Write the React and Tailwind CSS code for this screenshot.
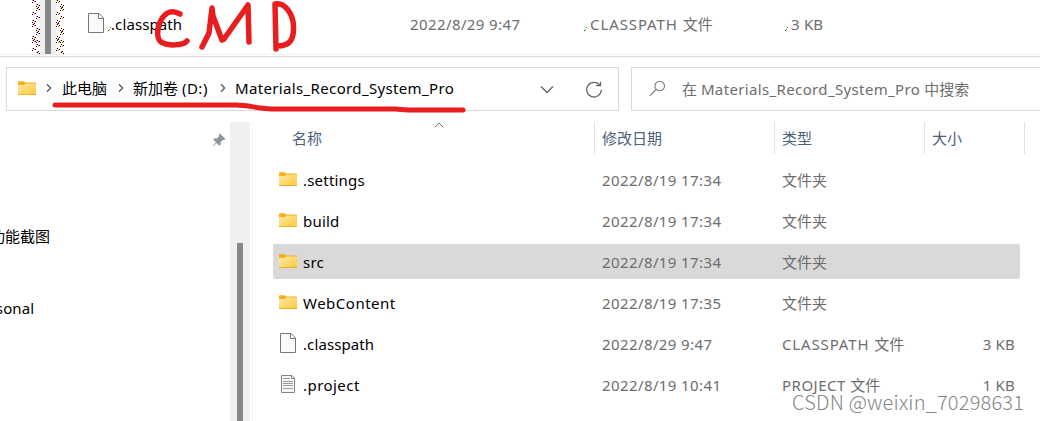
import React from 'react';

const rows = [
  { name: '.settings', date: '2022/8/19 17:34', type: '', kind: '文件夹', size: '', icon: 'folder' },
  { name: 'build', date: '2022/8/19 17:34', type: '', kind: '文件夹', size: '', icon: 'folder' },
  { name: 'src', date: '2022/8/19 17:34', type: '', kind: '文件夹', size: '', icon: 'folder', selected: true },
  { name: 'WebContent', date: '2022/8/19 17:35', type: '', kind: '文件夹', size: '', icon: 'folder', spacing: 'tracking-[0.5px]' },
  { name: '.classpath', date: '2022/8/29 9:47', type: 'CLASSPATH ', kind: '文件', size: '3 KB', icon: 'file', spacing: 'tracking-[0.1px]' },
  { name: '.project', date: '2022/8/19 10:41', type: 'PROJECT ', kind: '文件', size: '1 KB', icon: 'text', spacing: 'tracking-[0.45px]' },
];

const FolderIcon = () => (
  <svg width="18" height="15" viewBox="0 0 18 15" className="shrink-0">
    <defs>
      <linearGradient id="folder" x1="0" y1="0" x2="1" y2="1">
        <stop offset="0" stopColor="#ffe9a6" />
        <stop offset="1" stopColor="#ffc937" />
      </linearGradient>
    </defs>
    <path d="M0 1.2Q0 .2 1 .2H5.6L7.4 1.5H17Q18 1.5 18 2.5V5H0Z" fill="#f5b01c" />
    <path d="M0 4H5.8L7.6 2.6H18V14H0Z" fill="url(#folder)" />
    <path d="M0 13.5H18" stroke="#eeb02c" />
  </svg>
);

const FileIcon = () => (
  <svg width="17" height="21" viewBox="0 0 17 21" className="shrink-0">
    <path d="M.5 .5H11L15.5 5V19.5H.5Z" fill="#fafafa" stroke="#777" />
    <path d="M10.5 .5V5.5H15.5" fill="none" stroke="#777" />
  </svg>
);

const TextFileIcon = () => (
  <svg width="15" height="19" viewBox="0 0 15 19" className="shrink-0">
    <path d="M.5 .5H11L13.5 3V17.5H.5Z" fill="#f7f7f7" stroke="#858585" />
    <path d="M10.5 .5V3.5H13.5" fill="none" stroke="#858585" />
    <path d="M2 3.5H9M2 6.5H12M2 8.5H12M2 10.5H12M2 13.5H12" stroke="#9a9a9a" />
  </svg>
);

const icons = { folder: FolderIcon, file: FileIcon, text: TextFileIcon };

const Chevron = () => (
  <svg width="6" height="10" viewBox="0 0 6 10" className="shrink-0">
    <path d="M1 1.2L4.6 5L1 8.8" fill="none" stroke="#606060" strokeWidth="1.4" />
  </svg>
);

// leftover pixels along the edges of the old scrollbar
const Speckle = ({ id, a, b }) => (
  <svg width="8" height="54" viewBox="0 0 8 54" className="shrink-0" shapeRendering="crispEdges">
    <defs>
      <pattern id={id} width="4" height="4" patternUnits="userSpaceOnUse">
        <path d="M1 0h1v1h-1zM0 2h1v1h-1zM3 1h1v1h-1zM2 3h1v1h-1z" fill="#000" />
        <path d="M0 0h1v1h-1zM2 1h1v1h-1z" fill={a} />
        <path d="M2 2h1v1h-1zM1 3h1v1h-1z" fill={b} />
      </pattern>
    </defs>
    <path
      d="M0 0H4V3H0ZM4 4H8V11H4ZM0 12H4V15H0ZM4 16H8V19H4ZM0 20H4V27H0ZM4 28H8V35H4ZM0 36H4V43H0ZM4 40H8V43H4ZM4 44H8V47H4ZM0 48H4V51H0ZM4 51H8V54H4Z"
      fill={`url(#${id})`}
    />
  </svg>
);

const Speck = () => (
  <svg width="3" height="4" viewBox="0 0 3 4" className="mt-[10px] shrink-0" shapeRendering="crispEdges">
    <path d="M1 0h1v1h-1z" fill="#f5e663" />
    <path d="M2 0h1v1h-1zM1 2h1v1h-1z" fill="#4fa84f" />
    <path d="M0 3h1v1h-1z" fill="#334" />
  </svg>
);

const TopStrip = () => (
  <div className="flex h-[57px] shrink-0 flex-col border-b border-[#d9d9d9]">
    <div className="flex h-[55px] border-b border-[#f1f1f1]">
      <div className="flex h-[54px] w-[88px] pl-8">
        <Speckle id="speckle-a" a="#f6f" b="#ee3" />
        <div className="flex w-4 justify-center bg-[#f0f0f0]">
          <div className="w-[6px] bg-[#868686]" />
        </div>
        <Speckle id="speckle-b" a="#ee3" b="#c4a" />
      </div>
      <div className="flex h-12 items-center text-[#6d6d6d]">
        <div className="w-5 pb-[1px]"><FileIcon /></div>
        <div className="w-[3px]"><Speck /></div>
        <div className="w-[299px] text-black tracking-[0.1px]">.classpath</div>
        <div className="w-[174px] tracking-[0.4px]">2022/8/29 9:47</div>
        <div className="w-[6px]"><Speck /></div>
        <div className="w-[195px]"><span className="tracking-[0.9px]">CLASSPATH </span>文件</div>
        <div className="w-[6px]"><Speck /></div>
        <div className="tracking-[0.2px]">3 KB</div>
      </div>
    </div>
  </div>
);

const AddressBar = () => (
  <div className="flex shrink-0 gap-3 pt-[10px] pl-[6px]">
    <div className="flex h-11 w-[613px] items-center border border-[#d9d9d9] pb-[2px] pl-[11px]">
      <FolderIcon />
      <div className="w-[26px] pl-[10px]"><Chevron /></div>
      <div className="w-[56px]">此电脑</div>
      <div className="w-[15px]"><Chevron /></div>
      <div className="w-[87px]">新加卷 <span className="tracking-[0.5px]">(D:)</span></div>
      <div className="w-[15px]"><Chevron /></div>
      <div className="w-[305px] tracking-[0.35px]">Materials_Record_System_Pro</div>
      <svg width="14" height="9" viewBox="0 0 14 9" className="mt-[2px]">
        <path d="M1 1.5L7 7.5L13 1.5" fill="none" stroke="#666" strokeWidth="1.4" />
      </svg>
      <svg width="18" height="18" viewBox="0 0 18 18" className="mt-[3px] ml-[31px]">
        <path d="M14.8 4.2A7.3 7.3 0 1 0 16.3 9" fill="none" stroke="#686868" strokeWidth="1.3" />
        <path d="M15.5 .8V4.6H11" fill="none" stroke="#686868" strokeWidth="1.3" />
      </svg>
    </div>
    <div className="flex h-11 flex-1 items-center border border-r-0 border-[#d9d9d9] pl-[17px] text-[#6d6d6d]">
      <svg width="17" height="17" viewBox="0 0 17 17" className="mb-[2px]">
        <circle cx="10.7" cy="6" r="4.8" fill="none" stroke="#777" strokeWidth="1.1" />
        <path d="M7.2 9.4L.8 15.6" stroke="#777" strokeWidth="1.2" />
      </svg>
      <div className="ml-4">在 <span className="tracking-[0.36px]">Materials_Record_System_Pro</span> 中搜索</div>
    </div>
  </div>
);

const SideNav = () => (
  <div className="flex w-[253px] shrink-0 border-r border-[#f3f3f3]">
    <div className="w-[230px] overflow-hidden whitespace-nowrap">
      <div className="flex h-9 items-center justify-end pr-1">
        <svg width="14" height="14" viewBox="0 0 14 14">
          <path d="M8 .5L13.5 6L12 7L11 6.8L8.8 9L8.5 12L7.3 12.8L4.5 10L1 13.5L.5 13L4 9.5L1.2 6.6L2 5.5L5 5.2L7.2 3L7 1.5Z" fill="#8b969f" />
        </svg>
      </div>
      <div className="-ml-[10px] mt-[60px] h-9 leading-9 text-black">功能截图</div>
      <div className="-ml-[19px] mt-9 h-9 leading-9 tracking-[0.1px] text-black">ersonal</div>
    </div>
    <div className="flex w-5 justify-center bg-[#f0f0f0]">
      <div className="mt-[121px] w-[6px] bg-[#868686]" />
    </div>
  </div>
);

const FileList = () => (
  <div className="flex-1">
    <div className="flex h-8 items-center text-[#4c607a]">
      <div className="flex h-8 w-[342px] items-center border-r border-[#e3e3e3] pl-[39px]">
        名称
        <svg width="10" height="6" viewBox="0 0 10 6" className="mb-[26px] ml-[112px]">
          <path d="M.7 5.3L5 1L9.3 5.3" fill="none" stroke="#777" />
        </svg>
      </div>
      <div className="flex h-8 w-[180px] items-center border-r border-[#e3e3e3] pl-[7px]">修改日期</div>
      <div className="flex h-8 w-[150px] items-center border-r border-[#e3e3e3] pl-[7px]">类型</div>
      <div className="flex h-8 w-[100px] items-center border-r border-[#e3e3e3] pl-[7px]">大小</div>
    </div>
    <div className="flex flex-col gap-[6px] pt-2 pl-5">
      {rows.map((row) => {
        const Icon = icons[row.icon];
        return (
          <div
            key={row.name}
            className={`flex h-[35px] w-[747px] items-center rounded-[2px] text-[#6d6d6d] ${row.selected ? 'bg-[#d9d9d9]' : ''}`}
          >
            <div className="flex w-[30px] justify-center pb-[1px]"><Icon /></div>
            <div className={`w-[299px] text-black ${row.spacing || 'tracking-[0.2px]'}`}>{row.name}</div>
            <div className="w-[180px] tracking-[0.4px]">{row.date}</div>
            <div className="w-[130px]"><span className={row.icon === 'file' ? 'tracking-[0.85px]' : 'tracking-[0.5px]'}>{row.type}</span>{row.kind}</div>
            <div className="w-[103px] text-right tracking-[0.2px]">{row.size}</div>
          </div>
        );
      })}
    </div>
  </div>
);

// red pen marks drawn over the window
const PenMarks = () => (
  <svg width="480" height="120" viewBox="0 0 480 120" className="pointer-events-none absolute top-0 left-0">
    <g fill="none" stroke="#e81e1e" strokeWidth="5.5" strokeLinecap="round" strokeLinejoin="round">
      <path d="M180 14C173 10 166 11 161 20C156 29 157 39 161 42C167 46 183 46 187 41" />
      <path d="M202 47L209 33L212 8L213 16L222 40L224 39L248 5L249 42" />
      <path d="M275 4L276 49M275 4C285 2 293 14 293.5 26C294 40 290 46 277 46" />
      <path d="M55 105H236C250 105 258 109 275 109H395L408 110H463" strokeWidth="5" />
    </g>
  </svg>
);

export default function App() {
  return (
    <div className="relative flex h-[421px] w-[1040px] flex-col overflow-hidden whitespace-nowrap bg-white font-['Noto_Sans','Noto_Sans_CJK_SC',sans-serif] text-[15px] leading-5 text-black">
      <TopStrip />
      <AddressBar />
      <div className="flex min-h-0 flex-1 pt-[11px]">
        <SideNav />
        <FileList />
      </div>
      <PenMarks />
      <div className="absolute top-[390px] left-[792px] font-['Noto_Sans_CJK_SC',sans-serif] text-[20px] leading-6 font-light tracking-[0.2px] text-[#858585] [text-shadow:-1px_-1px_0_#ffffffb0]">
        CSDN @weixin_70298631
      </div>
    </div>
  );
}
